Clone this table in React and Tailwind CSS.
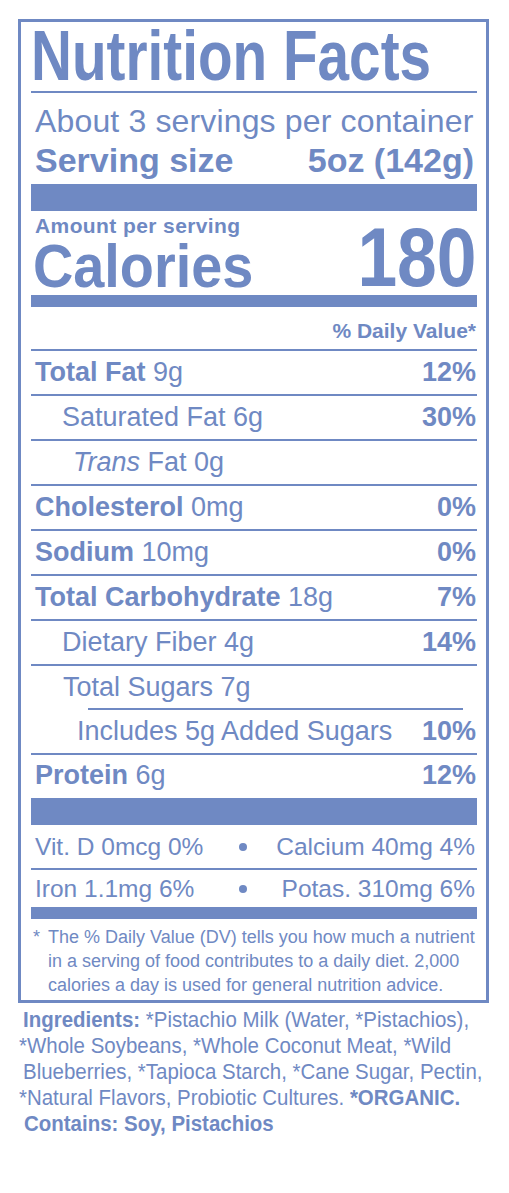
import React from "react";

const C = "text-[#6f89c3]";

function Row({ children, dv, pl = "pl-[4px]", border = true, h = "h-[45px]", leading = "leading-[43px]" }) {
  return (
    <div className={`flex justify-between ${h} ${leading} text-[27px] ${border ? "border-b-2 border-[#6f89c3]" : ""}`}>
      <div className={`${pl} whitespace-nowrap`}>{children}</div>
      {dv ? <div className="pr-[1px] font-bold whitespace-nowrap">{dv}</div> : null}
    </div>
  );
}

export default function App() {
  return (
    <div className={`w-[509px] min-h-[1193px] bg-white pt-[19px] font-['Liberation_Sans',Arial,sans-serif] ${C}`}>
      <div className="ml-[18px] w-[471px] border-[3px] border-[#6f89c3] pl-[10px] pr-[9px]">
        {/* Title */}
        <div className="h-[69px] leading-[69px] text-[70px] font-bold whitespace-nowrap">
          <span className="inline-block scale-x-[0.81] origin-left">Nutrition Facts</span>
        </div>
        <div className="h-[2px] bg-[#6f89c3]" />

        {/* Servings */}
        <div className="mt-[12px] text-[32px] leading-none pl-[4px] tracking-[0.15px] whitespace-nowrap">
          About 3 servings per container
        </div>
        <div className="mt-[6px] flex justify-between text-[34px] leading-none font-bold pl-[4px] pr-[3px] whitespace-nowrap">
          <span>Serving size</span>
          <span>5oz (142g)</span>
        </div>
        <div className="mt-[7px] h-[27px] bg-[#6f89c3]" />

        {/* Calories */}
        <div className="flex justify-between items-end h-[84px]">
          <div className="flex flex-col pt-[3px]">
            <div className="h-[21px] leading-[21px] text-[21px] font-bold tracking-[0.4px] pl-[4px] whitespace-nowrap">
              Amount per serving
            </div>
            <div className="h-[59px] leading-[59px] text-[62px] font-bold pl-[2px] whitespace-nowrap">
              <span className="inline-block scale-x-[0.9] origin-left">Calories</span>
            </div>
          </div>
          <div className="mb-[1px] leading-[73px] text-[83px] font-bold pr-[1px] whitespace-nowrap">
            <span className="inline-block scale-x-[0.86] origin-right">180</span>
          </div>
        </div>
        <div className="h-[12px] bg-[#6f89c3]" />

        {/* Daily value header */}
        <div className="h-[44px] border-b-2 border-[#6f89c3] pt-[13px] text-right text-[21px] leading-none font-bold pr-[1px]">
          % Daily Value*
        </div>

        {/* Nutrient rows */}
        <Row dv="12%"><b>Total Fat</b> 9g</Row>
        <Row dv="30%" pl="pl-[31px]">Saturated Fat 6g</Row>
        <Row pl="pl-[42px]"><i>Trans</i> Fat 0g</Row>
        <Row dv="0%"><b>Cholesterol</b> 0mg</Row>
        <Row dv="0%"><b>Sodium</b> 10mg</Row>
        <Row dv="7%"><b>Total Carbohydrate</b> 18g</Row>
        <Row dv="14%" pl="pl-[31px]">Dietary Fiber 4g</Row>
        <Row pl="pl-[32px]" border={false} h="h-[42px]" leading="leading-[42px]">Total Sugars 7g</Row>
        <div className="ml-[57px] mr-[14px] h-[2px] bg-[#6f89c3]" />
        <Row dv="10%" pl="pl-[46px]">Includes 5g Added Sugars</Row>
        <Row dv="12%" border={false} h="h-[43px]" leading="leading-[40px]"><b>Protein</b> 6g</Row>
        <div className="h-[27px] bg-[#6f89c3]" />

        {/* Vitamins */}
        <div className="flex items-center h-[45px] border-b-2 border-[#6f89c3] text-[24.5px] leading-[41px]">
          <div className="w-[208px] pl-[4px] whitespace-nowrap">Vit. D 0mcg 0%</div>
          <div className="w-[8px] h-[8px] rounded-full bg-[#6f89c3]" />
          <div className="flex-1 text-right pr-[2px] whitespace-nowrap">Calcium 40mg 4%</div>
        </div>
        <div className="flex items-center h-[37px] text-[24.5px] leading-[37px]">
          <div className="w-[208px] pl-[4px] whitespace-nowrap">Iron 1.1mg 6%</div>
          <div className="w-[8px] h-[8px] rounded-full bg-[#6f89c3]" />
          <div className="flex-1 text-right pr-[2px] whitespace-nowrap">Potas. 310mg 6%</div>
        </div>
        <div className="h-[12px] bg-[#6f89c3]" />

        {/* Footnote */}
        <div className="pt-[6px] pb-[3px] pl-[2px] text-[18px] leading-[24px]">
          <div className="flex whitespace-nowrap">
            <span className="w-[15px]">*</span>
            <span>The % Daily Value (DV) tells you how much a nutrient</span>
          </div>
          <div className="pl-[15px] whitespace-nowrap">in a serving of food contributes to a daily diet. 2,000</div>
          <div className="pl-[15px] whitespace-nowrap">calories a day is used for general nutrition advice.</div>
        </div>
      </div>

      {/* Ingredients */}
      <div className="mt-[4px] text-[22px] leading-[26px]">
        <div className="pl-[23px] whitespace-nowrap">
          <span className="inline-block scale-x-[0.93] origin-left"><b>Ingredients:</b> *Pistachio Milk (Water, *Pistachios),</span>
        </div>
        <div className="pl-[19px] whitespace-nowrap">
          <span className="inline-block scale-x-[0.93] origin-left">*Whole Soybeans, *Whole Coconut Meat, *Wild</span>
        </div>
        <div className="pl-[23px] whitespace-nowrap">
          <span className="inline-block scale-x-[0.93] origin-left">Blueberries, *Tapioca Starch, *Cane Sugar, Pectin,</span>
        </div>
        <div className="pl-[19px] whitespace-nowrap">
          <span className="inline-block scale-x-[0.93] origin-left">*Natural Flavors, Probiotic Cultures. <b>*ORGANIC.</b></span>
        </div>
        <div className="pl-[24px] whitespace-nowrap">
          <span className="inline-block scale-x-[0.93] origin-left font-bold">Contains: Soy, Pistachios</span>
        </div>
      </div>
    </div>
  );
}
